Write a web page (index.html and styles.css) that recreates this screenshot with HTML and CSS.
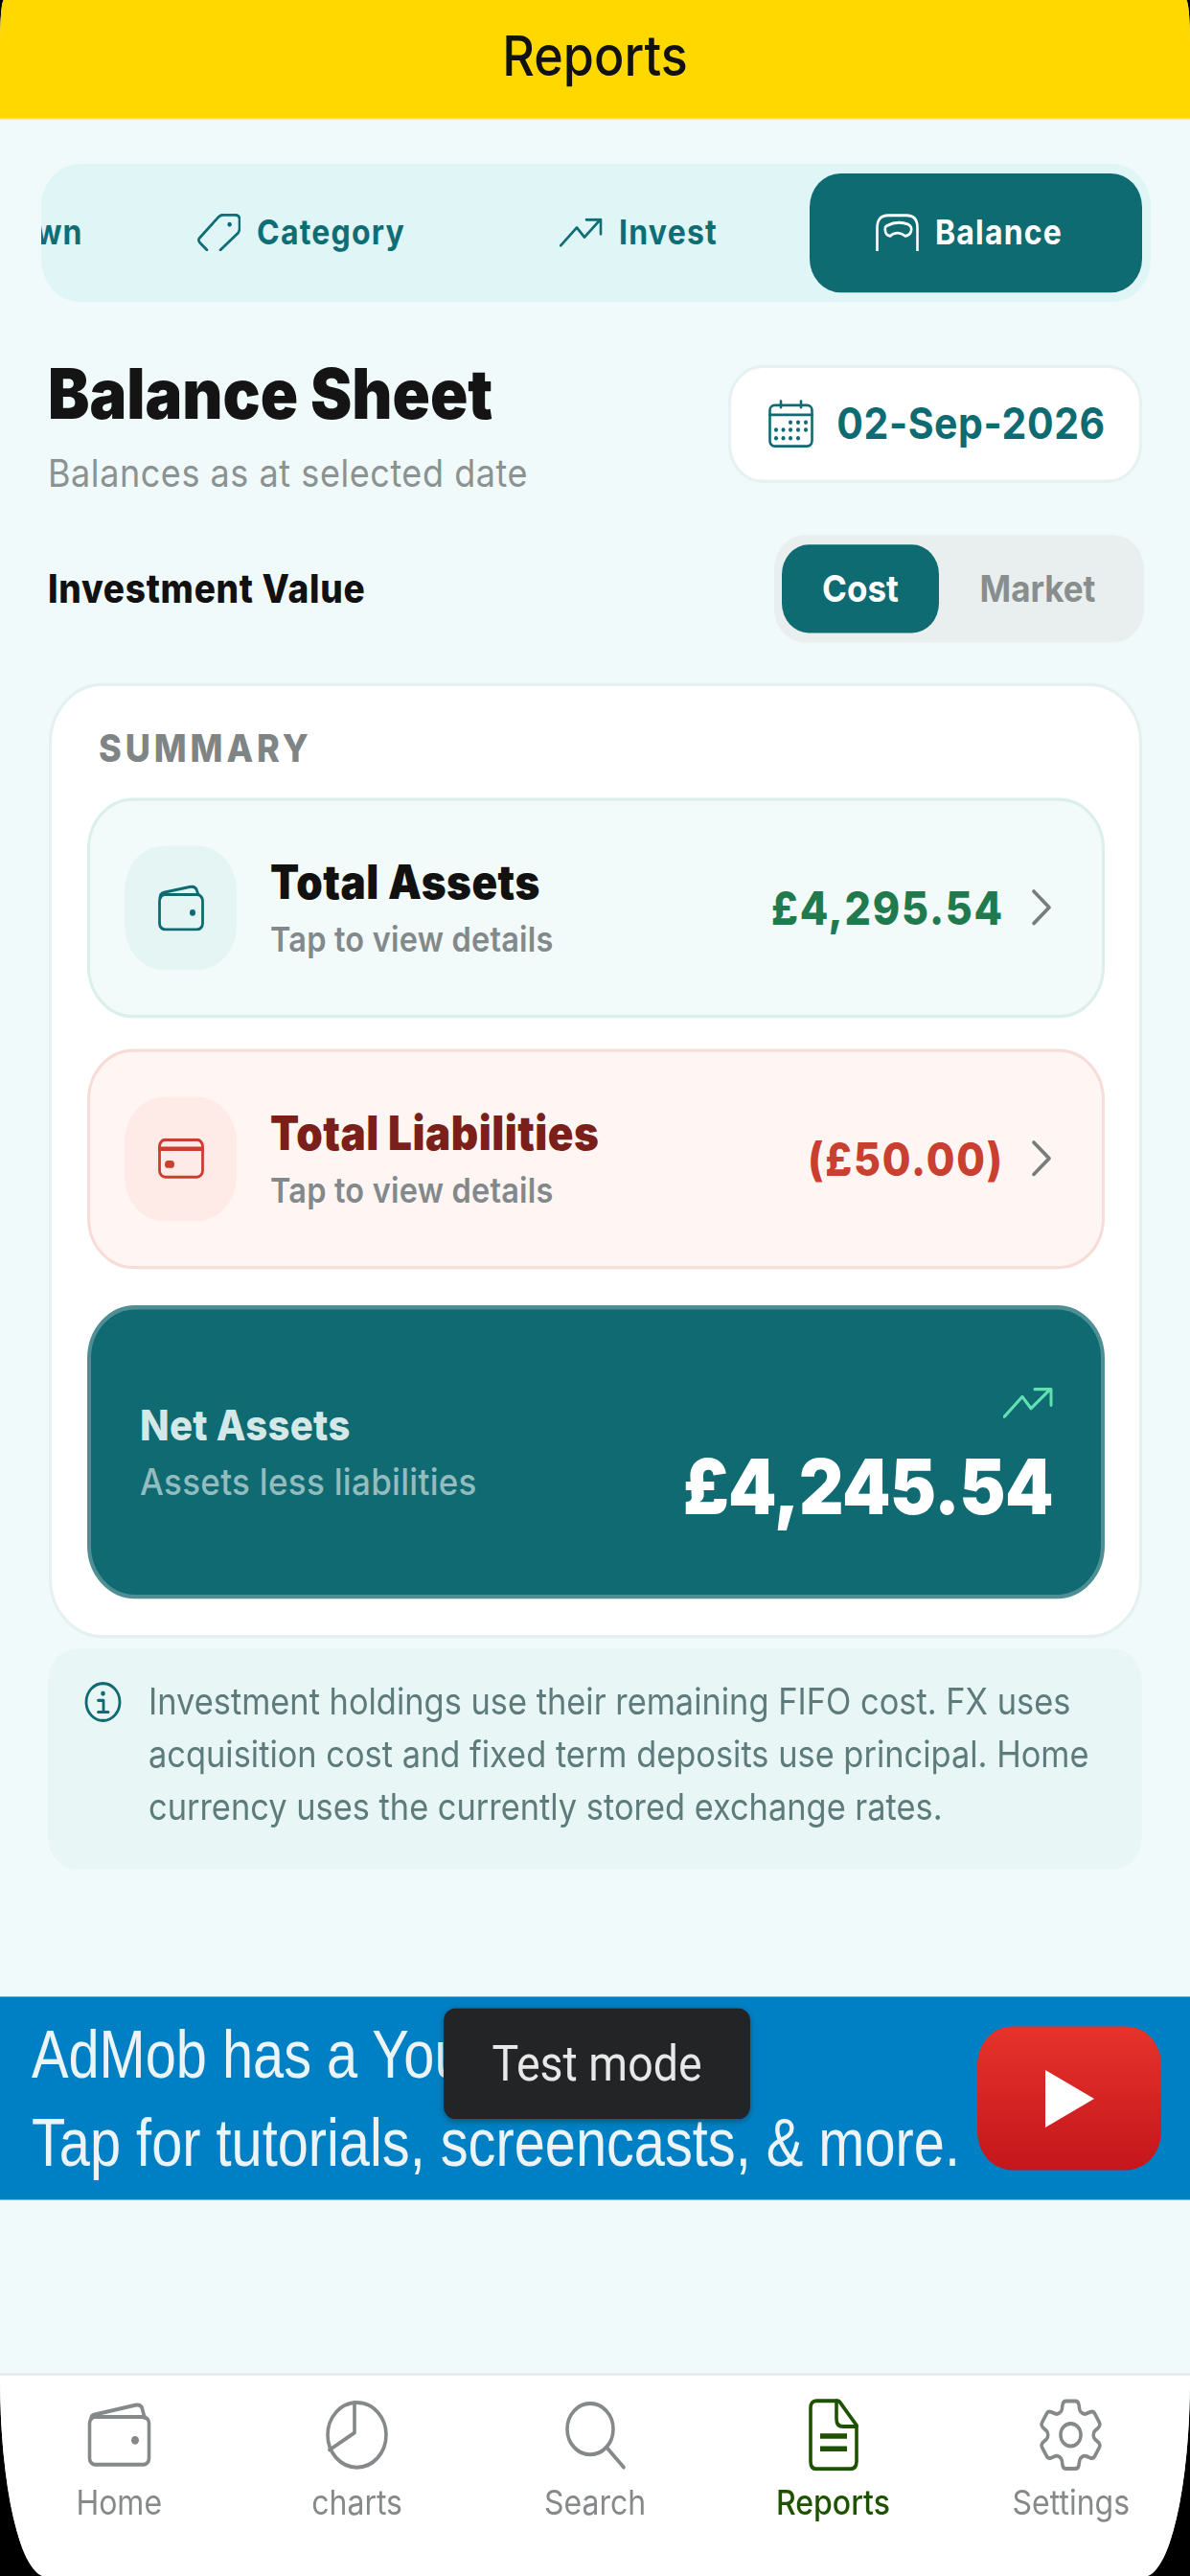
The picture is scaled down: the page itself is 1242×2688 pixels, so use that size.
FILE: index.html
```html
<!DOCTYPE html>
<html>
	<head>
		<meta charset="UTF-8">
		<title>Reports</title>
		<link rel="stylesheet" href="styles.css">
	</head>
	<body>
		<div class="screen">
			<header class="topbar">Reports</header>

			<main class="content">
				<nav class="tabs">
					<div class="tab">
						<svg class="tab-icon" viewBox="0 0 45 35"><path d="M3 30 L22 8 H42 M3 30 L42 30"/></svg>
						<span>Breakdown</span>
					</div>
					<div class="tab">
						<svg class="tab-icon" viewBox="0 0 45 35"><path d="M10 34 L2.5 27 Q0.5 25 2 23 L22 3 Q24 1 27 1 H39 Q44 1 44 5 V14 Q44 16 42.5 18 L24 34"/><circle class="dot" cx="33.6" cy="10" r="2.2"/></svg>
						<span>Category</span>
					</div>
					<div class="tab">
						<svg class="tab-icon" viewBox="0 0 45 27"><path d="M1 26 L18 9 L26 18 L42 2 M28 1.5 H43 V15"/></svg>
						<span>Invest</span>
					</div>
					<div class="tab tab-active">
						<svg class="tab-icon" viewBox="0 0 45 35"><path d="M1.5 35 V13 Q1.5 1.5 13 1.5 H32 Q43.5 1.5 43.5 13 V35"/><path d="M12 11 Q23 6 34 10 Q38 12 37 16 Q36 20 31 21 Q27 18 23 18 Q18 18 15 21 Q10 20 10 16 Q9 12 12 11Z"/></svg>
						<span>Balance</span>
					</div>
				</nav>

				<section class="head">
					<div class="head-text">
						<h1>Balance Sheet</h1>
						<p class="head-sub">Balances as at selected date</p>
					</div>
					<div class="date-btn">
						<svg class="cal" viewBox="0 0 47 45">
							<rect x="1.5" y="5" width="44" height="38.5" rx="5"/>
							<path d="M1.5 14 H45.5 M13 1 V7 M34 1 V7"/>
							<g class="dots">
								<circle cx="23" cy="21" r="2"/><circle cx="31" cy="21" r="2"/><circle cx="39" cy="21" r="2"/>
								<circle cx="8" cy="28" r="2"/><circle cx="15.500" cy="28" r="2"/><circle cx="23" cy="28" r="2"/><circle cx="31" cy="28" r="2"/><circle cx="39" cy="28" r="2"/>
								<circle cx="8" cy="36" r="2"/><circle cx="15.500" cy="36" r="2"/><circle cx="23" cy="36" r="2"/><circle cx="31" cy="36" r="2"/>
							</g>
						</svg>
						<span>02-Sep-2026</span>
					</div>
				</section>

				<section class="value-row">
					<span class="value-label">Investment Value</span>
					<div class="segment">
						<span class="seg seg-on">Cost</span>
						<span class="seg">Market</span>
					</div>
				</section>

				<section class="card">
					<h2>SUMMARY</h2>

					<div class="row row-assets">
						<div class="tile">
							<svg class="tile-icon" viewBox="0 0 48 43">
								<path d="M2 12 Q2 8 6 7 L34 1.500 Q38 1 40 4 L42 9"/>
								<rect x="1.500" y="9" width="45" height="33" rx="6"/>
								<circle class="dot" cx="36" cy="26" r="3"/>
							</svg>
						</div>
						<div class="row-text">
							<div class="row-title">Total Assets</div>
							<div class="row-sub">Tap to view details</div>
						</div>
						<div class="row-amount">£4,295.54</div>
						<svg class="chev" viewBox="0 0 22 34"><path d="M3 2 L19 17 L3 32"/></svg>
					</div>

					<div class="row row-liab">
						<div class="tile">
							<svg class="tile-icon" viewBox="0 0 48 38">
								<rect x="1.500" y="1.500" width="45" height="35" rx="6"/>
								<path d="M1.500 10 H46.500" class="band"/>
								<rect class="dot" x="7" y="21" width="10" height="7" rx="3.500"/>
							</svg>
						</div>
						<div class="row-text">
							<div class="row-title">Total Liabilities</div>
							<div class="row-sub">Tap to view details</div>
						</div>
						<div class="row-amount">(£50.00)</div>
						<svg class="chev" viewBox="0 0 22 34"><path d="M3 2 L19 17 L3 32"/></svg>
					</div>

					<div class="net">
						<div>
							<div class="net-title">Net Assets</div>
							<div class="net-sub">Assets less liabilities</div>
						</div>
						<div class="net-right">
							<svg class="net-trend" viewBox="0 0 52 29"><path d="M1 28 L20 9 L29 20 L49 2 M33 2 H50 V17"/></svg>
							<div class="net-value">£4,245.54</div>
						</div>
					</div>
				</section>

				<section class="note">
					<svg class="note-icon" viewBox="0 0 39 38">
						<circle cx="19.500" cy="19" r="17.500"/>
						<circle class="dot" cx="19.500" cy="11" r="2.300"/>
						<path d="M14.500 17.500 H20 V28 M14.500 28.500 H25"/>
					</svg>
					<p>Investment holdings use their remaining FIFO cost. FX uses acquisition cost and fixed term deposits use principal. Home currency uses the currently stored exchange rates.</p>
				</section>
			</main>

			<section class="ad">
				<div class="ad-text">
					<div>AdMob has a YouTube</div>
					<div>Tap for tutorials, screencasts, &amp; more.</div>
				</div>
				<div class="ad-play"></div>
				<div class="test-badge">Test mode</div>
			</section>

			<footer class="bottom">
				<div class="nav-item">
					<svg class="nav-icon" viewBox="0 0 67 60">
						<path d="M4 15 Q4 12 7 11 L50 2 Q55 1 57 4 L60 14"/>
						<rect x="2.500" y="13" width="62" height="45" rx="6"/>
						<circle class="dot" cx="50" cy="35" r="4"/>
					</svg>
					<span>Home</span>
				</div>
				<div class="nav-item">
					<svg class="nav-icon" viewBox="0 0 67 66">
						<circle cx="33.500" cy="33" r="30.500"/>
						<path d="M31 2.500 V31 L5 47"/>
					</svg>
					<span>charts</span>
				</div>
				<div class="nav-item">
					<svg class="nav-icon" viewBox="0 0 67 63">
						<circle cx="28" cy="26" r="24"/>
						<path d="M45 43 L63 62"/>
					</svg>
					<span>Search</span>
				</div>
				<div class="nav-item nav-active">
					<svg class="nav-icon" viewBox="0 0 67 68">
						<path d="M16 2 H38 Q40 2 42 5 L58 25 V59 Q58 66 51 66 H16 Q10 66 10 59 V9 Q10 2 16 2Z"/>
						<path d="M37 2 V19 Q37 26 44 26 H58"/>
						<path d="M20 35 H48 M20 47 H48" class="thick"/>
					</svg>
					<span>Reports</span>
				</div>
				<div class="nav-item">
					<svg class="nav-icon" viewBox="2.500 2.500 19 19" preserveAspectRatio="xMidYMid meet">
						<path class="thin" d="M9.594 3.940c.09-.542.56-.94 1.110-.94h2.593c.55 0 1.020.398 1.110.94l.213 1.281c.063.374.313.686.645.87.074.04.147.083.22.127.325.196.72.257 1.075.124l1.217-.456a1.125 1.125 0 0 1 1.370.49l1.296 2.247a1.125 1.125 0 0 1-.26 1.431l-1.003.827c-.293.241-.438.613-.43.992a7.723 7.723 0 0 1 0 .255c-.008.378.137.75.43.991l1.004.827c.424.35.534.955.26 1.430l-1.298 2.247a1.125 1.125 0 0 1-1.369.491l-1.217-.456c-.355-.133-.75-.072-1.076.124a6.47 6.47 0 0 1-.22.128c-.331.183-.581.495-.644.869l-.213 1.281c-.09.543-.56.94-1.110.94h-2.594c-.55 0-1.019-.398-1.110-.94l-.213-1.281c-.062-.374-.312-.686-.644-.87a6.52 6.52 0 0 1-.22-.127c-.325-.196-.72-.257-1.076-.124l-1.217.456a1.125 1.125 0 0 1-1.369-.49l-1.297-2.247a1.125 1.125 0 0 1 .26-1.431l1.004-.827c.292-.24.437-.613.43-.991a6.932 6.932 0 0 1 0-.255c.007-.38-.138-.751-.43-.992l-1.004-.827a1.125 1.125 0 0 1-.26-1.430l1.297-2.247a1.125 1.125 0 0 1 1.370-.491l1.216.456c.356.133.751.072 1.076-.124.072-.044.146-.086.22-.128.332-.183.582-.495.644-.869l.214-1.280Z"/>
						<path class="thin" d="M15 12a3 3 0 1 1-6 0 3 3 0 0 1 6 0Z"/>
					</svg>
					<span>Settings</span>
				</div>
			</footer>
		</div>
	</body>
</html>
```

FILE: styles.css
```css
html{
	background: #000;
	overflow: hidden;
}
body{
	margin: 0;
	padding: 0;
	height: 2688px;
}
/* the capture is stretched about 11% taller than wide, whole page follows it */
.screen{
	width: 1242px;
	height: 2421.6px;
	transform: scaleY(1.11);
	transform-origin: 0 0;
	background: #f1fafa;
	border-radius: 4px 4px 48px 48px / 40px 40px 187px 187px;
	overflow: hidden;
	display: flex;
	flex-direction: column;
	font-family: Inter, "Noto Sans", sans-serif;
}
svg{
	display: block;
	fill: none;
	stroke: currentColor;
	stroke-linecap: round;
	stroke-linejoin: round;
}
.dot{
	fill: currentColor;
	stroke: none;
}

.topbar{
	height: 111.500px;
	box-sizing: border-box;
	padding-bottom: 6px;
	flex: none;
	background: #ffd800;
	border-bottom: 1px solid #d9dfdf;
	display: flex;
	align-items: center;
	justify-content: center;
	font-size: 52px;
	font-weight: 500;
	color: #111;
}

.content{
	padding: 42px 50px 0;
	height: 1647px;
	box-sizing: border-box;
	flex: none;
}

.tabs{
	margin: 0 -9px 0 -7px;
	height: 130px;
	box-sizing: border-box;
	padding: 9px;
	border-radius: 40px;
	background: #e0f5f5;
	display: flex;
	justify-content: flex-end;
	gap: 5px;
	overflow: hidden;
}
.tab{
	flex: none;
	width: 347px;
	display: flex;
	align-items: center;
	justify-content: center;
	gap: 17px;
	border-radius: 32px;
	color: #0f6d75;
	font-size: 32px;
	font-weight: 700;
	letter-spacing: 1.200px;
}
.tab-icon{
	width: 45px;
	stroke-width: 2.6;
}
.tab-active{
	box-sizing: border-box;
	padding-right: 14px;
	background: #0f6b72;
	color: #fff;
}

.head{
	margin-top: 59px;
	display: flex;
	justify-content: space-between;
	align-items: flex-start;
}
.head-text{
	margin-top: -10px;
}
h1{
	margin: 0;
	font-size: 65px;
	line-height: 76px;
	font-weight: 900;
	color: #141414;
}
.head-sub{
	margin: 14px 0 0;
	font-size: 36px;
	line-height: 44px;
	color: #8b9292;
	letter-spacing: .550px;
}
.date-btn{
	box-sizing: border-box;
	width: 432px;
	height: 111px;
	padding-left: 4px;
	background: #fff;
	border: 3px solid #e6f1f1;
	border-radius: 36px;
	display: flex;
	align-items: center;
	justify-content: center;
	gap: 24px;
	color: #0f6b72;
	font-size: 41px;
	font-weight: 700;
	letter-spacing: .600px;
}
.cal{
	width: 47px;
	stroke-width: 2.6;
}
.cal .dots circle{
	fill: currentColor;
	stroke: none;
}

.value-row{
	margin-top: 36px;
	margin-right: -2px;
	display: flex;
	justify-content: space-between;
	align-items: center;
}
.value-label{
	font-size: 37px;
	font-weight: 800;
	letter-spacing: .750px;
	color: #111;
}
.segment{
	box-sizing: border-box;
	width: 386px;
	height: 101px;
	padding: 9px 8px;
	background: #e9eeee;
	border-radius: 32px;
	display: flex;
	align-items: stretch;
	font-size: 35px;
	font-weight: 700;
	color: #888e8e;
}
.seg{
	flex: 1;
	display: flex;
	align-items: center;
	justify-content: center;
}
.seg-on{
	flex: none;
	width: 164px;
	background: #0f6b72;
	color: #fff;
	border-radius: 28px;
}

.card{
	box-sizing: border-box;
	margin: 38px 0 0 1px;
	height: 898px;
	background: #fff;
	border: 3px solid #e4f1f0;
	border-radius: 56px;
	padding: 0 36px 0 37px;
}
h2{
	margin: 0;
	padding: 36px 0 0 12px;
	height: 105px;
	box-sizing: border-box;
	font-size: 36px;
	line-height: 44px;
	font-weight: 800;
	letter-spacing: 3.900px;
	color: #7f8585;
}
.row{
	box-sizing: border-box;
	height: 207px;
	margin-bottom: 29px;
	border-radius: 48px;
	border-width: 3px;
	border-style: solid;
	padding: 0 52px 0 36px;
	display: flex;
	align-items: center;
}
.row-assets{
	background: #f2fbf9;
	border-color: #dbefec;
	color: #0f6b72;
}
.row-liab{
	background: #fff6f4;
	border-color: #f7dcd7;
	color: #c93f30;
}
.tile{
	flex: none;
	width: 117px;
	height: 117px;
	border-radius: 42px;
	display: flex;
	align-items: center;
	justify-content: center;
}
.row-assets .tile{
	background: #e4f5f4;
}
.row-liab .tile{
	background: #feeae7;
}
.tile-icon{
	width: 48px;
	stroke-width: 2.8;
}
.band{
	stroke-width: 4;
}
.row-text{
	margin-left: 35px;
	flex: 1;
}
.row-title{
	font-size: 44px;
	line-height: 50px;
	font-weight: 900;
	letter-spacing: .500px;
	color: #111;
}
.row-liab .row-title{
	color: #7a1f1a;
}
.row-sub{
	margin-top: 11px;
	font-size: 32.500px;
	line-height: 38px;
	font-weight: 600;
	letter-spacing: .200px;
	color: #83898a;
}
.row-amount{
	font-size: 43px;
	font-weight: 800;
	letter-spacing: 1.800px;
	color: #217a4d;
}
.row-liab .row-amount{
	color: #c93f30;
}
.chev{
	flex: none;
	width: 22px;
	margin-left: 28px;
	color: #777c7d;
	stroke-width: 3.500;
}

.net{
	box-sizing: border-box;
	height: 276px;
	margin-top: 34px;
	background: #0f6a72;
	border: 4px solid #4e8e94;
	border-radius: 50px;
	padding: 0 50px 0 51px;
	display: flex;
	justify-content: space-between;
	align-items: center;
}
.net-title{
	font-size: 40px;
	line-height: 46px;
	font-weight: 800;
	letter-spacing: .300px;
	color: #d5e8e8;
}
.net-sub{
	margin-top: 8px;
	font-size: 35px;
	line-height: 42px;
	font-weight: 500;
	letter-spacing: .300px;
	color: #93bcbf;
}
.net-right{
	padding-top: 14px;
	display: flex;
	flex-direction: column;
	align-items: flex-end;
}
.net-trend{
	width: 52px;
	color: #62e0b4;
	stroke-width: 3;
}
.net-value{
	margin-top: 22px;
	font-size: 72px;
	line-height: 84px;
	font-weight: 900;
	letter-spacing: -.500px;
	color: #fff;
}

.note{
	box-sizing: border-box;
	height: 207px;
	margin: 10px 0 0 0;
	background: #e8f6f6;
	border-radius: 30px;
	padding: 31px 40px 0 38px;
	display: flex;
	gap: 28px;
	color: #0f6b72;
}
.note-icon{
	flex: none;
	width: 39px;
	height: 38px;
	stroke-width: 2.800;
}
.note p{
	margin: -6px 0 0;
	font-size: 34.400px;
	line-height: 49.500px;
	color: #5e7b7b;
}

.ad{
	position: relative;
	height: 191px;
	margin-top: 118.500px;
	flex: none;
	background: #0080c4;
	display: flex;
	align-items: center;
	justify-content: space-between;
	padding: 0 30px 0 33px;
	color: #ecf4f8;
}
.ad-text{
	flex: 1;
	width: 0;
	font-family: "Liberation Sans", sans-serif;
	font-size: 64px;
	line-height: 83px;
	white-space: nowrap;
	transform: scaleX(.902);
	transform-origin: 0 50%;
}
.ad-play{
	flex: none;
	width: 192px;
	height: 135px;
	border-radius: 36px;
	background: linear-gradient(#e6332a, #c4161c);
	display: flex;
	align-items: center;
	justify-content: center;
}
.ad-play::after{
	content: "";
	border-left: 51px solid #fff;
	border-top: 27px solid transparent;
	border-bottom: 27px solid transparent;
}
.test-badge{
	position: absolute;
	left: 463px;
	top: 11px;
	width: 320px;
	height: 104px;
	border-radius: 12px;
	background: #232426;
	color: #e8e8e8;
	font-family: Roboto, sans-serif;
	font-size: 46.500px;
	display: flex;
	align-items: center;
	justify-content: center;
	box-shadow: 0 2px 6px rgba(0,0,0,.3);
}

.bottom{
	flex: 1;
	margin-top: 163px;
	background: #fff;
	border-top: 2px solid #e3e8e8;
	display: flex;
	padding-top: 22px;
}
.nav-item{
	flex: 1;
	display: flex;
	flex-direction: column;
	align-items: center;
	color: #85898a;
	font-size: 32px;
}
.nav-item span{
	margin-top: 10px;
	line-height: 40px;
}
.nav-icon{
	width: 67px;
	height: 68px;
	stroke-width: 3.600;
}
.nav-icon .thin{
	stroke-width: 1;
}
.nav-active{
	color: #1f5200;
	font-weight: 500;
}
.thick{
	stroke-width: 5;
	stroke-linecap: butt;
}
```
